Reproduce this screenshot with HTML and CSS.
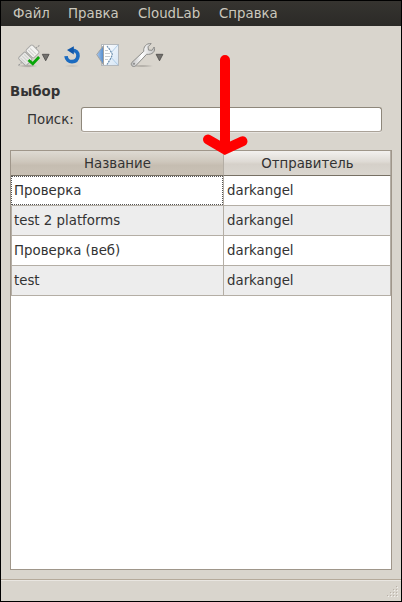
FILE: index.html
```html
<!DOCTYPE html>
<html lang="ru">
<head>
<meta charset="utf-8">
<title>CloudLab</title>
<link rel="stylesheet" href="styles.css">
</head>
<body>
<div class="window">
  <nav class="menubar"><span class="m1">Файл</span><span class="m2">Правка</span><span class="m3">CloudLab</span><span class="m4">Справка</span></nav>
  <div class="toolbar">
    <svg class="tools" width="160" height="40" viewBox="10 35 160 40">
      <defs>
        <linearGradient id="metal" x1="0" y1="0" x2="1" y2="0"><stop offset="0" stop-color="#bbb"/><stop offset=".45" stop-color="#fff"/><stop offset="1" stop-color="#c4c4c4"/></linearGradient>
        <linearGradient id="blue" x1="0" y1="0" x2="1" y2="0"><stop offset="0" stop-color="#a9c8ee"/><stop offset="1" stop-color="#528acb"/></linearGradient>
        <linearGradient id="paper" x1="0" y1="0" x2="1" y2="1"><stop offset="0" stop-color="#fff"/><stop offset="1" stop-color="#d5e5f5"/></linearGradient>
        <radialGradient id="shade"><stop offset="0" stop-color="#8d8983" stop-opacity=".75"/><stop offset="1" stop-color="#8d8983" stop-opacity="0"/></radialGradient>
      </defs>
      <ellipse cx="28" cy="66" rx="10" ry="1.7" fill="url(#shade)"/>
      <path d="M18.500 65.500l3-3M35.500 48.500l4-3.200" stroke="#999" stroke-width="1.200" stroke-dasharray="2 1"/>
      <g transform="translate(29 55) rotate(-45)">
        <rect x="-10" y="-5.500" width="9.500" height="11" rx="1.500" fill="#e9e9e7" stroke="#a5a5a3"/>
        <rect x=".5" y="-5.500" width="9" height="11" rx="1.500" fill="#f3f3f1" stroke="#aaaaa8"/>
        <path d="M-8 -4v8M-5.500 -4v8M-3 -4v8M3 -4v8M5.500 -4v8" stroke="#d0d0ce"/>
      </g>
      <path d="M28.500 60l4.300 3.700 6.300-6.700" fill="none" stroke="#08a608" stroke-width="2.800"/>
      <path d="M42.300 54.300h6.800l-3.400 6.500z" fill="#73716e" stroke="#4a4946" stroke-width=".8"/>
      <ellipse cx="72" cy="66" rx="8" ry="1.500" fill="url(#shade)" opacity=".4"/>
      <path d="M72 50.200C76 50.200 78.200 52.500 78 56c-.4 3.600-2.900 5.600-6 5.600-3.200 0-5.600-2.200-6-5.500" fill="none" stroke="#1b6bc0" stroke-width="3.600"/>
      <path d="M73.800 46.200v8.300l-6.800-4.600z" fill="#1057aa"/>
      <rect x="101.500" y="44.500" width="17" height="21" fill="url(#paper)" stroke="#b5b9bd"/>
      <path d="M118 45l-9 10 9 10" fill="none" stroke="#a9c9e7" stroke-width=".9"/>
      <path d="M103.500 45.500L96.700 54.500 103.500 65z" fill="url(#blue)" stroke="#a3a3a1"/>
      <path d="M104 46h3l5.500 8.500-6 10h-2.500z" fill="#fff"/>
      <path d="M107 46c2 2.500 4.500 6 5.300 8.500-.8 3-3.300 7-5.300 10" fill="none" stroke="#6d8fae" stroke-width="1.200" stroke-dasharray="2 .8"/>
      <path d="M105 50.500h3M105 53.500h5M105 56.500h5M105 59.500h3" stroke="#c9ccd0"/>
      <ellipse cx="142" cy="66" rx="12" ry="1.300" fill="url(#shade)"/>
      <path d="M131.800 62.500l12-11.200c-.7-4 2.300-8.300 7.400-7.700l-3.200 3.200.5 3.300 3.600.2 2-3.300c1.900 4.300-1.900 8-7.500 7.300L135.500 66c-2.500 1.700-5.500-1-3.700-3.500z" fill="url(#metal)" stroke="#8c8c89"/>
      <circle cx="134" cy="63.700" r="1" fill="#888"/>
      <path d="M156.100 54.300h6.800l-3.400 6.500z" fill="#73716e" stroke="#4a4946" stroke-width=".8"/>
    </svg>
  </div>
  <h1>Выбор</h1>
  <div class="search"><label for="q">Поиск:</label><input id="q" type="text"></div>
  <div class="table">
    <div class="row header"><span>Название</span><span>Отправитель</span></div>
    <div class="row"><span class="focused">Проверка</span><span>darkangel</span></div>
    <div class="row alternate"><span>test 2 platforms</span><span>darkangel</span></div>
    <div class="row"><span>Проверка (веб)</span><span>darkangel</span></div>
    <div class="row alternate"><span>test</span><span>darkangel</span></div>
  </div>
  <footer>
    <svg width="12" height="12" viewBox="0 0 12 12"><path d="M10 1.500h1M7 4.500h1M10 4.500h1M4 7.500h1M7 7.500h1M10 7.500h1M1 10.500h1M4 10.500h1M7 10.500h1M10 10.500h1" stroke="#f2f0ed"/><path d="M9 .5h1M6 3.500h1M9 3.500h1M3 6.500h1M6 6.500h1M9 6.500h1M0 9.500h1M3 9.500h1M6 9.500h1M9 9.500h1" stroke="#b9b1a8"/></svg>
  </footer>
  <svg class="arrow" width="50" height="110" viewBox="200 50 50 110"><path d="M225 60v88M208 139.500l17 9.800 17.500-8" fill="none" stroke="#f00" stroke-width="10" stroke-linecap="round" stroke-linejoin="miter"/></svg>
</div>
</body>
</html>
```
FILE: styles.css
```css
* { box-sizing: border-box; }
body { margin: 0; font: 13.333px/16px "DejaVu Sans", sans-serif; color: #333; }
.window { position: relative; display: flex; flex-direction: column; width: 402px; height: 602px; border: 1px solid #000; background: #d9d5cd; overflow: hidden; }
.menubar { display: flex; height: 25px; padding: 5px 0 0 12px; background: linear-gradient(#363430, #2b2a27); color: #cbc8bd; white-space: nowrap; }
.m1 { width: 55px; }
.m2 { width: 70px; }
.m3 { width: 81px; }
.toolbar { height: 56px; padding: 9px 0 0 9px; }
.tools { display: block; }
h1 { height: 25px; margin: 0; padding: 2px 0 0 9px; font-size: 13.333px; line-height: 16px; }
.search { display: flex; height: 25px; padding: 0 19px 0 26px; }
.search label { width: 54px; padding-top: 5px; }
.search input { flex: 1; min-width: 0; padding: 2px 4px; font: inherit; border: 1px solid #8e877b; border-bottom-color: #aaa298; border-radius: 3px; background: #fff; box-shadow: 0 1px #e7e4df; outline: none; }
.table { height: 420px; margin: 18px 9px 0; border: 1px solid #9f968a; background: #fff; }
.row { display: grid; grid-template-columns: 213px 167px; height: 30px; }
.row span { padding: 7px 0 0 3px; border-right: 1px solid #b4aea5; border-bottom: 1px solid #b4aea5; }
.row span:first-child { border-left: 1px solid #b4aea5; padding-left: 2px; }
.alternate { background: #ededed; }
.header { height: 25px; text-align: center; }
.row.header span { padding: 5px 0 0 1px; border-left: 0; border-bottom-color: #777064; background: linear-gradient(#f3f1ef, #dedad4 45%, #d5d0c9 55%, #dad6cf); }
.row.header span:first-child { padding: 5px 0 0 1px; background: linear-gradient(#dedad3, #cec7bc 45%, #c5bdb1 60%, #c9c1b5); }
.row .focused { position: relative; }
.row span.focused { border-left-color: #fff; }
.focused::before { content: ""; position: absolute; inset: 0 0 0 -1px; border: 1px dotted #555; }
footer { display: flex; justify-content: flex-end; align-items: flex-end; height: 22px; margin-top: auto; padding: 0 2px 3px; border-top: 1px solid #b5aa9b; box-shadow: inset 0 1px #e9e6e1; }
.arrow { position: absolute; left: 199px; top: 49px; }
```
